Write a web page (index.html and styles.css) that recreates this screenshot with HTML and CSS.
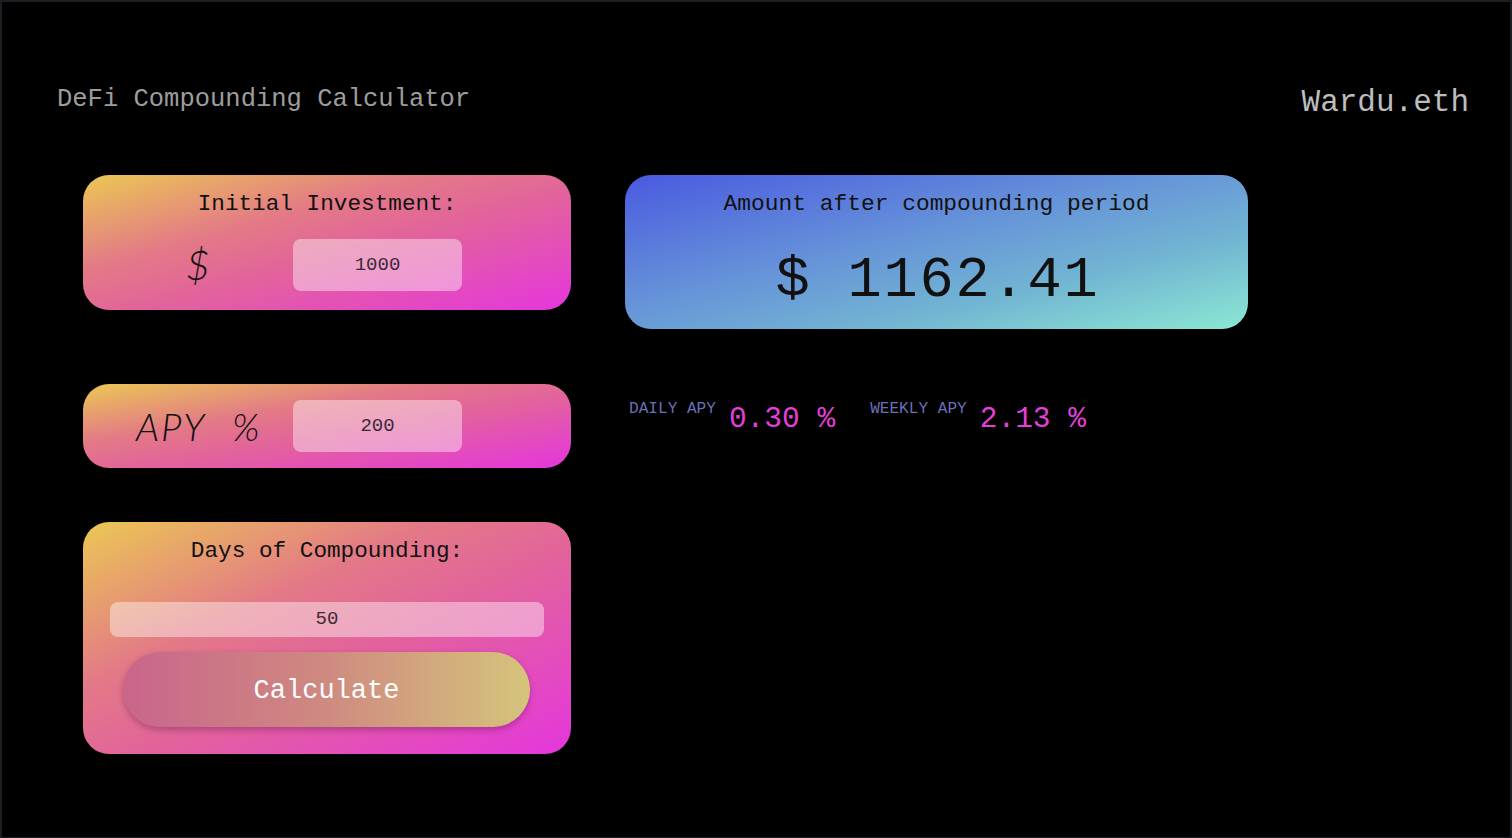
FILE: index.html
```html
<!DOCTYPE html>
<html lang="en">
<head>
<meta charset="utf-8">
<title>DeFi Compounding Calculator</title>
<link rel="stylesheet" href="styles.css">
</head>
<body>
<div class="app">
  <header class="header">
    <h1 class="title">DeFi Compounding Calculator</h1>
    <div class="brand">Wardu.eth</div>
  </header>
  <main class="main">
    <section class="left">
      <div class="card card-invest">
        <div class="card-title">Initial Investment:</div>
        <div class="invest-row">
          <span class="symbol">$</span>
          <div class="field field-box">1000</div>
        </div>
      </div>
      <div class="card card-apy">
        <span class="apy-label"><span class="apy-word">APY</span><span class="apy-pct">%</span></span>
        <div class="field field-box">200</div>
      </div>
      <div class="card card-days">
        <div class="card-title">Days of Compounding:</div>
        <div class="field field-wide">50</div>
        <button class="calc-btn">Calculate</button>
      </div>
    </section>
    <section class="right">
      <div class="result">
        <div class="result-title">Amount after compounding period</div>
        <div class="result-value">$ 1162.41</div>
      </div>
      <div class="stats">
        <div class="stat">
          <span class="stat-label">DAILY APY</span>
          <span class="stat-value">0.30 %</span>
        </div>
        <div class="stat">
          <span class="stat-label">WEEKLY APY</span>
          <span class="stat-value">2.13 %</span>
        </div>
      </div>
    </section>
  </main>
</div>
</body>
</html>
```

FILE: styles.css
```css
* { box-sizing: border-box; }
html, body {
  margin: 0;
  padding: 0;
  background: #000;
}
.app {
  width: 1512px;
  height: 838px;
  border: 2px solid #1b1f24;
  border-bottom-width: 1px;
  background: #000;
  font-family: "Liberation Mono", "DejaVu Sans Mono", monospace;
  overflow: hidden;
}
.header {
  display: flex;
  justify-content: space-between;
  align-items: flex-start;
  padding: 0 41px 0 55px;
  height: 173px;
}
.title {
  margin: 83px 0 0 0;
  font-size: 25.5px;
  font-weight: normal;
  line-height: 30px;
  color: #9d9d9d;
}
.brand {
  margin-top: 83px;
  font-size: 31px;
  line-height: 36px;
  color: #bdbdbd;
}
.main {
  display: flex;
  align-items: flex-start;
  gap: 54px;
  padding-left: 81px;
}
.left {
  width: 488px;
  display: flex;
  flex-direction: column;
}
.card {
  border-radius: 26px;
  background: linear-gradient(to bottom right, #ebc853 0%, #e37a86 35%, #e2649a 55%, #e536dd 100%);
  color: #111;
}
.card-title {
  text-align: center;
  font-size: 22.7px;
  line-height: 28px;
}
.card-invest {
  height: 135px;
  padding-top: 15px;
}
.invest-row {
  display: flex;
  align-items: center;
  margin-top: 21px;
}
.symbol {
  font-family: "Lato", "Open Sans", sans-serif;
  font-style: italic;
  font-weight: 300;
  font-size: 41px;
  width: 210px;
  padding-left: 103px;
  line-height: 52px;
}
.field {
  background: rgba(255, 255, 255, 0.42);
  border-radius: 8px;
  text-align: center;
  color: #3a2a36;
  font-size: 19px;
}
.field-box {
  width: 169px;
  height: 52px;
  line-height: 52px;
}
.card-apy {
  margin-top: 74px;
  height: 84px;
  display: flex;
  align-items: center;
}
.apy-label {
  display: flex;
  align-items: center;
  width: 210px;
  padding-left: 53px;
  font-family: "Lato", "Open Sans", sans-serif;
  font-style: italic;
  font-weight: 300;
  font-size: 38px;
  line-height: 52px;
}
.apy-word {
  letter-spacing: 2px;
}
.apy-pct {
  margin-left: 26px;
}
.card-days {
  margin-top: 54px;
  height: 232px;
  padding: 15px 27px 0 27px;
}
.field-wide {
  margin-top: 37px;
  height: 35px;
  line-height: 35px;
}
.calc-btn {
  display: block;
  margin: 15px 0 0 13px;
  width: 407px;
  height: 75px;
  border: none;
  border-radius: 38px;
  background: linear-gradient(to right, #c9658b 0%, #cf8a80 50%, #d5c47b 100%);
  box-shadow: 0 3px 6px rgba(80, 20, 60, 0.35);
  color: #fff;
  font-family: "Liberation Mono", "DejaVu Sans Mono", monospace;
  font-size: 27px;
  padding-top: 4px;
  cursor: pointer;
}
.right {
  width: 623px;
  display: flex;
  flex-direction: column;
}
.result {
  height: 154px;
  border-radius: 26px;
  background: linear-gradient(to bottom right, #4a5ae0 0%, #6796d8 45%, #72b5d2 70%, #8be8d3 100%);
  color: #111;
  text-align: center;
  padding-top: 15px;
}
.result-title {
  font-size: 22.9px;
  line-height: 28px;
}
.result-value {
  margin-top: 30px;
  font-size: 57px;
  letter-spacing: 1.8px;
  padding-left: 2px;
  line-height: 66px;
}
.stats {
  display: flex;
  gap: 35px;
  margin-top: 70px;
  padding-left: 4px;
}
.stat {
  display: flex;
  align-items: flex-start;
  gap: 13px;
}
.stat-label {
  font-size: 16.1px;
  line-height: 18px;
  color: #6a70b8;
  margin-top: 1px;
}
.stat-value {
  font-size: 29.5px;
  line-height: 34px;
  color: #e33fd9;
  margin-top: 3px;
}
```
